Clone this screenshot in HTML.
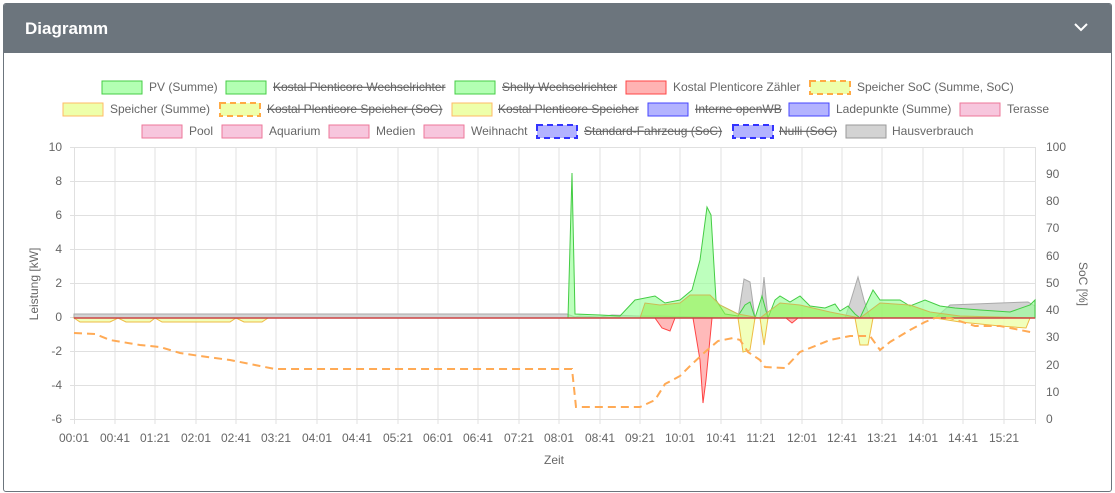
<!DOCTYPE html>
<html><head><meta charset="utf-8"><style>
body{margin:0;background:#fff;font-family:"Liberation Sans",sans-serif;}
.card{position:absolute;left:3px;top:3px;width:1107px;height:487px;border:1px solid #6c757d;border-radius:3px;overflow:hidden;}
.hd{height:49px;background:#6c757d;color:#fff;font-weight:bold;font-size:17px;line-height:49px;padding-left:21px;}
svg{position:absolute;left:0;top:0}
</style></head><body>
<div class="card"><div class="hd">Diagramm</div></div>
<svg width="1115" height="493" font-family="Liberation Sans, sans-serif" font-size="12" fill="#666">
<path d="M1075 24 L1081 30 L1087 24" stroke="#fff" stroke-width="2" fill="none"/>
<g stroke-width="1">
<rect x="102" y="81" width="40" height="13" fill="#b3ffb3" stroke="#4c4"/><text x="149" y="91">PV (Summe)</text>
<rect x="226" y="81" width="40" height="13" fill="#b3ffb3" stroke="#4c4"/><text x="273" y="91" text-decoration="line-through">Kostal Plenticore Wechselrichter</text>
<rect x="455" y="81" width="40" height="13" fill="#b3ffb3" stroke="#4c4"/><text x="502" y="91" text-decoration="line-through">Shelly Wechselrichter</text>
<rect x="626" y="81" width="40" height="13" fill="#ffb3b3" stroke="#f44"/><text x="673" y="91">Kostal Plenticore Zähler</text>
<rect x="810" y="81" width="40" height="13" fill="#eeffaa" stroke="#fa4" stroke-width="2" stroke-dasharray="6,4"/><text x="857" y="91">Speicher SoC (Summe, SoC)</text>
<rect x="63" y="103" width="40" height="13" fill="#eeffaa" stroke="#fb6"/><text x="110" y="113">Speicher (Summe)</text>
<rect x="220" y="103" width="40" height="13" fill="#eeffaa" stroke="#fa4" stroke-width="2" stroke-dasharray="6,4"/><text x="267" y="113" text-decoration="line-through">Kostal Plenticore Speicher (SoC)</text>
<rect x="452" y="103" width="40" height="13" fill="#eeffaa" stroke="#fb6"/><text x="498" y="113" text-decoration="line-through">Kostal Plenticore Speicher</text>
<rect x="648" y="103" width="40" height="13" fill="#b3b3ff" stroke="#44f"/><text x="695" y="113" text-decoration="line-through">Interne openWB</text>
<rect x="789" y="103" width="40" height="13" fill="#b3b3ff" stroke="#44f"/><text x="836" y="113">Ladepunkte (Summe)</text>
<rect x="960" y="103" width="40" height="13" fill="#f7c6dd" stroke="#e79"/><text x="1007" y="113">Terasse</text>
<rect x="142" y="125" width="40" height="13" fill="#f7c6dd" stroke="#e79"/><text x="189" y="135">Pool</text>
<rect x="222" y="125" width="40" height="13" fill="#f7c6dd" stroke="#e79"/><text x="269" y="135">Aquarium</text>
<rect x="329" y="125" width="40" height="13" fill="#f7c6dd" stroke="#e79"/><text x="376" y="135">Medien</text>
<rect x="424" y="125" width="40" height="13" fill="#f7c6dd" stroke="#e79"/><text x="471" y="135">Weihnacht</text>
<rect x="537" y="125" width="40" height="13" fill="#b3b3ff" stroke="#33f" stroke-width="2" stroke-dasharray="6,4"/><text x="584" y="135" text-decoration="line-through">Standard-Fahrzeug (SoC)</text>
<rect x="733" y="125" width="40" height="13" fill="#b3b3ff" stroke="#33f" stroke-width="2" stroke-dasharray="6,4"/><text x="779" y="135" text-decoration="line-through">Nulli (SoC)</text>
<rect x="846" y="125" width="40" height="13" fill="#d3d3d3" stroke="#999"/><text x="892" y="135">Hausverbrauch</text>
</g>
<g stroke="#e0e0e0" stroke-width="1">
<line x1="70" y1="147.5" x2="1035" y2="147.5"/><line x1="70" y1="181.5" x2="1035" y2="181.5"/><line x1="70" y1="215.5" x2="1035" y2="215.5"/><line x1="70" y1="249.5" x2="1035" y2="249.5"/><line x1="70" y1="283.5" x2="1035" y2="283.5"/><line x1="70" y1="317.5" x2="1035" y2="317.5"/><line x1="70" y1="351.5" x2="1035" y2="351.5"/><line x1="70" y1="385.5" x2="1035" y2="385.5"/><line x1="70" y1="419.5" x2="1035" y2="419.5"/>
<line x1="74.5" y1="147" x2="74.5" y2="424"/><line x1="115" y1="147" x2="115" y2="424"/><line x1="155" y1="147" x2="155" y2="424"/><line x1="196" y1="147" x2="196" y2="424"/><line x1="236" y1="147" x2="236" y2="424"/><line x1="276" y1="147" x2="276" y2="424"/><line x1="317" y1="147" x2="317" y2="424"/><line x1="357" y1="147" x2="357" y2="424"/><line x1="398" y1="147" x2="398" y2="424"/><line x1="438" y1="147" x2="438" y2="424"/><line x1="478" y1="147" x2="478" y2="424"/><line x1="519" y1="147" x2="519" y2="424"/><line x1="559" y1="147" x2="559" y2="424"/><line x1="600" y1="147" x2="600" y2="424"/><line x1="640" y1="147" x2="640" y2="424"/><line x1="680" y1="147" x2="680" y2="424"/><line x1="721" y1="147" x2="721" y2="424"/><line x1="761" y1="147" x2="761" y2="424"/><line x1="802" y1="147" x2="802" y2="424"/><line x1="842" y1="147" x2="842" y2="424"/><line x1="882" y1="147" x2="882" y2="424"/><line x1="923" y1="147" x2="923" y2="424"/><line x1="963" y1="147" x2="963" y2="424"/><line x1="1004" y1="147" x2="1004" y2="424"/><line x1="1035.5" y1="147" x2="1035.5" y2="424"/>
</g>
<g font-size="12" text-anchor="end">
<text x="62" y="151">10</text><text x="62" y="185">8</text><text x="62" y="219">6</text><text x="62" y="253">4</text><text x="62" y="287">2</text><text x="62" y="321">0</text><text x="62" y="355">-2</text><text x="62" y="389">-4</text><text x="62" y="423">-6</text>
</g>
<g font-size="12">
<text x="1046" y="151">100</text><text x="1046" y="178">90</text><text x="1046" y="205">80</text><text x="1046" y="232">70</text><text x="1046" y="260">60</text><text x="1046" y="287">50</text><text x="1046" y="314">40</text><text x="1046" y="341">30</text><text x="1046" y="369">20</text><text x="1046" y="396">10</text><text x="1046" y="423">0</text>
</g>
<g font-size="12" text-anchor="middle">
<text x="74" y="442">00:01</text><text x="115" y="442">00:41</text><text x="155" y="442">01:21</text><text x="196" y="442">02:01</text><text x="236" y="442">02:41</text><text x="276" y="442">03:21</text><text x="317" y="442">04:01</text><text x="357" y="442">04:41</text><text x="398" y="442">05:21</text><text x="438" y="442">06:01</text><text x="478" y="442">06:41</text><text x="519" y="442">07:21</text><text x="559" y="442">08:01</text><text x="600" y="442">08:41</text><text x="640" y="442">09:21</text><text x="680" y="442">10:01</text><text x="721" y="442">10:41</text><text x="761" y="442">11:21</text><text x="802" y="442">12:01</text><text x="842" y="442">12:41</text><text x="882" y="442">13:21</text><text x="923" y="442">14:01</text><text x="963" y="442">14:41</text><text x="1004" y="442">15:21</text>
<text x="554" y="464">Zeit</text>
</g>
<text transform="translate(38,284) rotate(-90)" text-anchor="middle">Leistung [kW]</text>
<text transform="translate(1079,284) rotate(90)" text-anchor="middle">SoC [%]</text>
<path d="M74 314 L560 314 L567 314 L575 317 L580 316 L600 317 L612 315 L640 316 L660 316 L700 317 L738 318 L744 279 L750 282 L755 318 L760 318 L764 277 L768 318 L845 318 L850 303 L858 277 L864 300 L870 318 L935 318 L950 305 L1000 303 L1028 302 L1035 306 L1035 318 L74 318Z" fill="#d3d3d3" stroke="#aaa"/>
<path d="M74 318 L80 322 L110 322 L118 318 L126 322 L150 322 L155 318 L162 322 L230 322 L236 318 L244 322 L262 322 L268 318 L738 318 L743 352 L750 350 L755 318 L760 318 L764 345 L768 318 L855 318 L860 345 L868 345 L873 318 L935 318 L960 322 L1000 326 L1026 328 L1030 318Z" fill="#eeffaa" fill-opacity="0.8" stroke="#eb4"/>
<path d="M568 318 L572 173 L575 314 L600 315 L620 316 L635 300 L655 296 L665 303 L680 300 L692 290 L700 260 L707 207 L711 215 L716 300 L725 314 L738 316 L745 305 L750 302 L755 318 L762 296 L768 318 L775 300 L780 296 L790 302 L800 296 L810 306 L825 308 L835 304 L840 311 L848 306 L855 314 L860 318 L873 290 L880 300 L900 300 L910 306 L925 300 L940 306 L955 308 L980 310 L1010 312 L1030 305 L1035 300 L1035 318 L568 318Z" fill="#9f9" fill-opacity="0.65" stroke="#4c4"/>
<path d="M640 318 L645 303 L660 305 L680 303 L690 295 L710 295 L720 305 L738 314 L760 318 L780 303 L800 305 L830 312 L860 318 L880 303 L910 305 L930 312 L960 316 L1035 318Z" fill="#9e5" fill-opacity="0.6" stroke="#cb5"/>
<path d="M655 318 L662 328 L670 331 L675 318 L693 318 L700 360 L703 403 L706 380 L712 318 L786 318 L792 323 L798 318Z" fill="#ffb3b3" fill-opacity="0.9" stroke="#f44"/>
<line x1="74" y1="318" x2="1035" y2="318" stroke="#c44" stroke-width="1.5"/>
<path d="M74 333 L95 334 L110 340 L140 345 L160 347 L180 353 L200 356 L230 360 L260 366 L275 369 L572 369 L576 407 L640 407 L655 400 L665 384 L680 376 L690 366 L705 352 L718 341 L733 338 L740 340 L748 352 L760 360 L765 367 L785 368 L800 352 L830 340 L850 336 L870 336 L880 350 L890 342 L910 330 L925 322 L935 318 L950 318 L975 326 L1000 326 L1020 330 L1035 333" fill="none" stroke="#fa5" stroke-width="2" stroke-dasharray="8,5"/>
</svg>
</body></html>
